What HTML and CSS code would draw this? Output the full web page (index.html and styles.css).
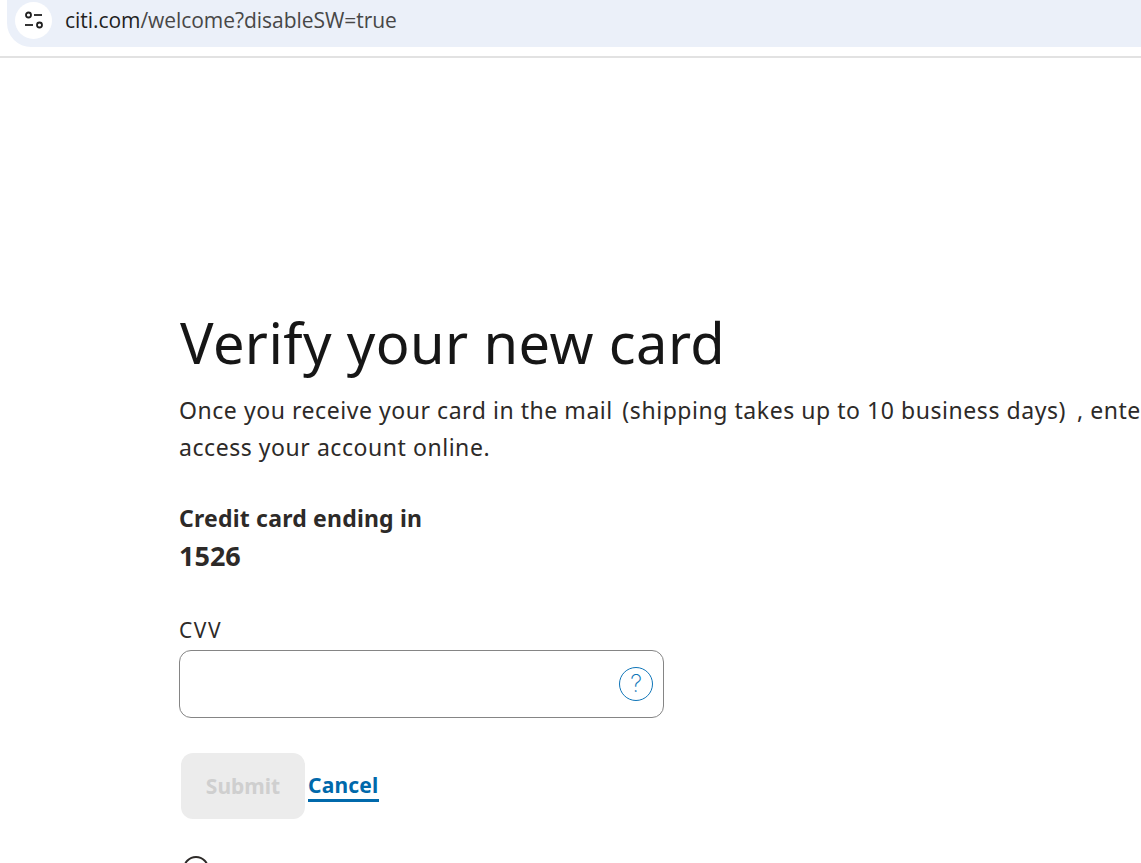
FILE: index.html
```html
<!DOCTYPE html>
<html lang="en">
<head>
    <meta charset="UTF-8">
    <meta name="viewport" content="width=device-width, initial-scale=1.0">
    <title>Verify your new card</title>
    <link rel="stylesheet" href="styles.css">
</head>
<body>
    <header class="toolbar">
        <div class="address-bar">
            <span class="site-info">
                <svg width="20" height="20" viewBox="0 0 20 20" fill="none" stroke="#1f1f1f" stroke-width="1.8">
                    <circle cx="4.5" cy="5" r="2.5"/>
                    <path d="M10 5h8"/>
                    <path d="M1 15h8"/>
                    <circle cx="15.5" cy="15" r="2.5"/>
                </svg>
            </span>
            <span class="url"><span class="url-host">citi.com</span>/welcome?disableSW=true</span>
        </div>
    </header>

    <main class="content">
        <h1>Verify your new card</h1>
        <p class="intro">Once you receive your card in the mail <span class="paren-open">(</span>shipping takes up to 10 business days<span class="paren-close">)</span>, enter the CVV to<br>access your account online.</p>

        <div class="card-info">
            <div class="card-label">Credit card ending in</div>
            <div class="card-number">1526</div>
        </div>

        <label class="field-label" for="cvv">CVV</label>
        <div class="field">
            <input type="text" id="cvv">
            <span class="help-icon">?</span>
        </div>

        <div class="actions">
            <button class="submit" disabled>Submit</button>
            <a class="cancel" href="#">Cancel</a>
        </div>

        <div class="info-icon"></div>
    </main>
</body>
</html>
```

FILE: styles.css
```css
/* General Styles */
html, body {
    height: 100%;
}

body {
    margin: 0;
    height: 863px;
    overflow: hidden;
    background: #fff;
    font-family: "Noto Sans", sans-serif;
    color: #2d2a28;
}

/* Browser toolbar */
.toolbar {
    height: 56px;
    border-bottom: 2px solid #e2e2e2;
    box-sizing: content-box;
}

.address-bar {
    display: flex;
    align-items: center;
    height: 47px;
    margin-left: 7px;
    padding-left: 8px;
    background: #ebf0f9;
    border-radius: 0 0 0 24px;
}

.site-info {
    display: flex;
    align-items: center;
    justify-content: center;
    width: 37px;
    height: 37px;
    margin-top: -7px;
    background: #fff;
    border-radius: 50%;
}

.url {
    margin-left: 13px;
    margin-top: -7px;
    font-family: "Open Sans", sans-serif;
    font-size: 21px;
    color: #474747;
    letter-spacing: -0.05px;
}

.url-host {
    color: #1f1f1f;
}

/* Page content */
.content {
    padding: 0 0 0 179px;
}

h1 {
    margin: 246px 0 0 1px;
    font-size: 56px;
    font-weight: 400;
    line-height: 76px;
    color: #161616;
    letter-spacing: 0.4px;
}

.intro {
    margin: 12px 0 0;
    font-size: 23px;
    line-height: 37px;
    white-space: nowrap;
    letter-spacing: 0.55px;
}

.paren-open {
    margin-left: 3px;
}

.paren-close {
    margin-right: 11px;
}

.card-info {
    margin-top: 34px;
    font-weight: 700;
}

.card-label {
    font-size: 23px;
    line-height: 37px;
    letter-spacing: 0.2px;
}

.card-number {
    font-size: 27px;
    line-height: 37px;
}

.field-label {
    display: block;
    margin-top: 42px;
    font-size: 21px;
    line-height: 28px;
    letter-spacing: 1.6px;
}

.field {
    position: relative;
    width: 485px;
    margin-top: 6px;
}

.field input {
    display: block;
    box-sizing: border-box;
    width: 100%;
    height: 68px;
    border: 1px solid #858585;
    border-radius: 12px;
    background: #fff;
}

.help-icon {
    position: absolute;
    top: 17px;
    right: 11px;
    box-sizing: border-box;
    width: 34px;
    height: 34px;
    border: 1px solid #0f75b8;
    border-radius: 50%;
    color: #0f75b8;
    font-family: Inter, sans-serif;
    font-size: 24px;
    line-height: 32px;
    text-align: center;
    font-weight: 200;
}

.actions {
    display: flex;
    align-items: center;
    margin: 35px 0 0 2px;
}

.submit {
    width: 124px;
    height: 66px;
    border: none;
    border-radius: 12px;
    background: #ececec;
    color: #cfcfcf;
    font-family: "Noto Sans", sans-serif;
    font-size: 21px;
    font-weight: 700;
}

.cancel {
    margin-left: 3px;
    color: #0069ab;
    font-size: 21px;
    font-weight: 700;
    line-height: 28px;
    text-decoration: none;
    letter-spacing: 0.2px;
    border-bottom: 3px solid #0069ab;
}

.info-icon {
    box-sizing: border-box;
    width: 26px;
    height: 26px;
    margin: 37px 0 0 4px;
    border: 2px solid #2d2a28;
    border-radius: 50%;
}
```
